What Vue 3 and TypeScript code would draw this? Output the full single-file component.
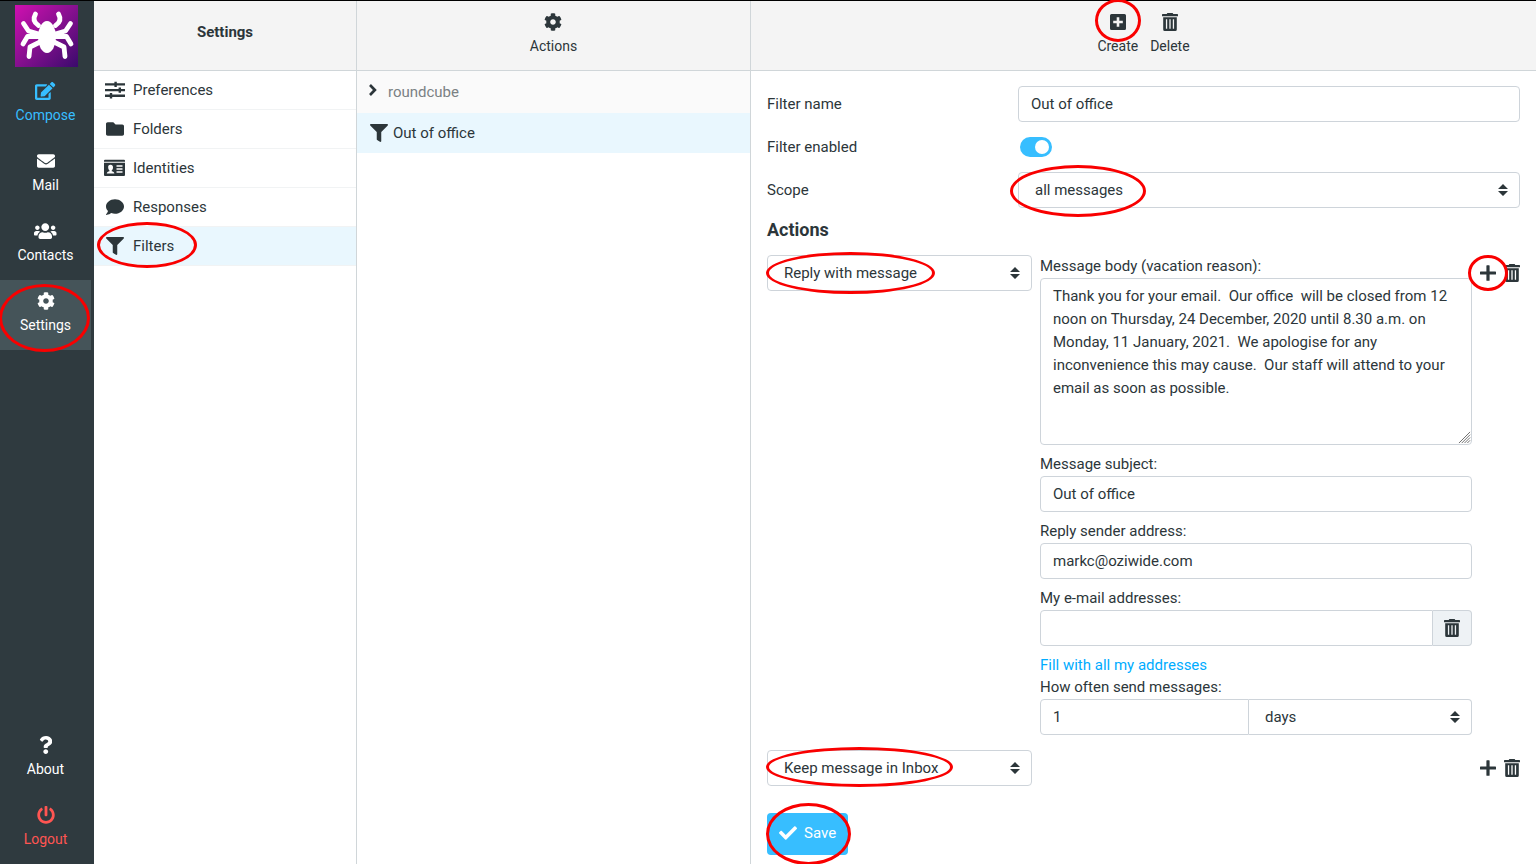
<script setup lang="ts">
import { h, ref } from 'vue'

interface Glyph { box: string; d: string }

const glyphs: Record<string, Glyph> = {
  edit: { box: '0 0 576 512', d: 'M402.6 83.2l90.2 90.2c3.8 3.8 3.8 10 0 13.8L274.4 405.6l-92.8 10.3c-12.4 1.4-22.9-9.1-21.5-21.5l10.3-92.8L388.8 83.2c3.8-3.8 10-3.8 13.8 0zm162-22.9l-48.8-48.8c-15.2-15.2-39.9-15.2-55.2 0l-35.4 35.4c-3.8 3.8-3.8 10 0 13.8l90.2 90.2c3.8 3.8 10 3.8 13.8 0l35.4-35.4c15.2-15.3 15.2-40 0-55.2zM384 346.2V448H64V128h229.8c3.2 0 6.2-1.3 8.5-3.5l40-40c7.6-7.6 2.2-20.5-8.5-20.5H48C21.5 64 0 85.5 0 112v352c0 26.5 21.5 48 48 48h352c26.5 0 48-21.5 48-48V306.2c0-10.7-12.9-16-20.5-8.5l-40 40c-2.2 2.3-3.5 5.3-3.5 8.5z' },
  mail: { box: '0 0 512 512', d: 'M502.3 190.8c3.9-3.1 9.7-.2 9.7 4.7V400c0 26.5-21.5 48-48 48H48c-26.5 0-48-21.5-48-48V195.6c0-5 5.7-7.8 9.7-4.7 22.4 17.4 52.1 39.5 154.1 113.6 21.1 15.4 56.7 47.8 92.2 47.6 35.7.3 72-32.8 92.3-47.6 102-74.1 131.6-96.3 154-113.7zM256 320c23.2.4 56.6-29.2 73.4-41.4 132.7-96.3 142.8-104.7 173.4-128.7 5.8-4.5 9.2-11.5 9.2-18.9v-19c0-26.5-21.5-48-48-48H48c-26.5 0-48 21.5-48 48v19c0 7.4 3.4 14.3 9.2 18.9 30.6 23.9 40.7 32.4 173.4 128.7 16.8 12.2 50.2 41.8 73.4 41.4z' },
  users: { box: '0 0 640 512', d: 'M96 224c35.3 0 64-28.7 64-64s-28.7-64-64-64-64 28.7-64 64 28.7 64 64 64zm448 0c35.3 0 64-28.7 64-64s-28.7-64-64-64-64 28.7-64 64 28.7 64 64 64zm32 32h-64c-17.6 0-33.5 7.1-45.1 18.6 40.3 22.1 68.9 62 75.1 109.4h66c17.7 0 32-14.3 32-32v-32c0-35.3-28.7-64-64-64zm-256 0c61.9 0 112-50.1 112-112S381.9 32 320 32 208 82.1 208 144s50.1 112 112 112zm76.8 32h-8.3c-20.8 10-43.9 16-68.5 16s-47.6-6-68.5-16h-8.3C179.6 288 128 339.6 128 403.2V432c0 26.5 21.5 48 48 48h288c26.5 0 48-21.5 48-48v-28.8c0-63.6-51.6-115.2-115.2-115.2zm-223.7-13.4C161.5 263.1 145.6 256 128 256H64c-35.3 0-64 28.7-64 64v32c0 17.7 14.3 32 32 32h65.9c6.3-47.4 34.9-87.3 75.2-109.4z' },
  cog: { box: '0 0 512 512', d: 'M487.4 315.7l-42.6-24.6c4.3-23.2 4.3-47 0-70.2l42.6-24.6c4.9-2.8 7.1-8.6 5.5-14-11.1-35.6-30-67.8-54.7-94.6-3.8-4.1-10-5.1-14.8-2.3L380.8 110c-17.9-15.4-38.5-27.3-60.8-35.1V25.8c0-5.6-3.9-10.5-9.4-11.7-36.7-8.2-74.3-7.8-109.2 0-5.5 1.2-9.4 6.1-9.4 11.7V75c-22.2 7.9-42.8 19.8-60.8 35.1L88.7 85.5c-4.9-2.8-11-1.9-14.8 2.3-24.7 26.7-43.6 58.9-54.7 94.6-1.7 5.4.6 11.2 5.5 14L67.3 221c-4.3 23.2-4.3 47 0 70.2l-42.6 24.6c-4.9 2.8-7.1 8.6-5.5 14 11.1 35.6 30 67.8 54.7 94.6 3.8 4.1 10 5.1 14.8 2.3l42.6-24.6c17.9 15.4 38.5 27.3 60.8 35.1v49.2c0 5.6 3.9 10.5 9.4 11.7 36.7 8.2 74.3 7.8 109.2 0 5.5-1.2 9.4-6.1 9.4-11.7v-49.2c22.2-7.9 42.8-19.8 60.8-35.1l42.6 24.6c4.9 2.8 11 1.9 14.8-2.3 24.7-26.7 43.6-58.9 54.7-94.6 1.5-5.5-.7-11.3-5.6-14.1zM256 336c-44.1 0-80-35.9-80-80s35.9-80 80-80 80 35.9 80 80-35.9 80-80 80z' },
  question: { box: '0 0 384 512', d: 'M202.021 0C122.202 0 70.503 32.703 29.914 91.026c-7.363 10.58-5.093 25.086 5.178 32.874l43.138 32.709c10.373 7.865 25.132 6.026 33.253-4.148 25.049-31.381 43.63-49.449 82.757-49.449 30.764 0 68.816 19.799 68.816 49.631 0 22.552-18.617 34.134-48.993 51.164-35.423 19.86-82.299 44.576-82.299 106.405V320c0 13.255 10.745 24 24 24h72.471c13.255 0 24-10.745 24-24v-5.773c0-42.86 125.268-44.645 125.268-160.627C377.504 66.256 286.902 0 202.021 0zM192 373.459c-38.196 0-69.271 31.075-69.271 69.271 0 38.195 31.075 69.27 69.271 69.27s69.271-31.075 69.271-69.271-31.075-69.27-69.271-69.27z' },
  power: { box: '0 0 512 512', d: 'M400 54.1c63 45 104 118.6 104 201.9 0 136.8-110.8 247.7-247.5 248C120 504.3 8.2 393 8 256.4 7.9 173.1 48.9 99.3 111.8 54.2c11.7-8.3 28-4.8 35 7.7L162.6 90c5.9 10.5 3.1 23.8-6.6 31-41.5 30.8-68 79.6-68 134.9-.1 92.3 74.5 168.1 168 168.1 91.6 0 168.6-74.2 168-169.1-.3-51.8-24.7-101.8-68.1-134-9.7-7.2-12.4-20.5-6.5-30.9l15.8-28.1c7-12.4 23.2-16.1 34.8-7.8zM296 264V24c0-13.3-10.7-24-24-24h-32c-13.3 0-24 10.7-24 24v240c0 13.3 10.7 24 24 24h32c13.3 0 24-10.7 24-24z' },
  sliders: { box: '0 0 20 18', d: 'M0 2.200h9.400V.7h2.400v1.500H20v2.300h-8.200v1.500H9.400V4.500H0zM0 7.900h13.600V6.400H16v1.500h4v2.300h-4v1.500h-2.400v-1.500H0zM0 13.600h4.800v-1.500h2.400v1.500H20v2.300H7.200v1.500H4.800v-1.500H0z' },
  folder: { box: '0 0 512 512', d: 'M464 128H272l-64-64H48C21.49 64 0 85.49 0 112v288c0 26.51 21.49 48 48 48h416c26.51 0 48-21.49 48-48V176c0-26.51-21.49-48-48-48z' },
  card: { box: '0 0 21 18', d: 'M1 .7h19a1 1 0 0 1 1 1v1H0v-1a1 1 0 0 1 1-1zM0 3.800h21v12.300a1 1 0 0 1-1 1H1a1 1 0 0 1-1-1zM6.500 5.800a2.300 2.300 0 0 0-2.300 2.600c0 1.300.6 2.400 1.300 3v.8c-1.500.3-2.700.9-2.700 2.300h7.600c0-1.400-1.200-2-2.700-2.300v-.8c.7-.6 1.300-1.700 1.300-3a2.300 2.300 0 0 0-2.500-2.600zM12.500 6.200v1.500h6V6.200zM12.500 9.200v1.500h6V9.200zM12.500 12.200v1.500h6v-1.500z' },
  comment: { box: '0 0 512 512', d: 'M256 32C114.6 32 0 125.1 0 240c0 49.6 21.4 95 57 130.7C44.500 421.1 2.700 466 2.200 466.500c-2.200 2.300-2.800 5.700-1.500 8.700S4.800 480 8 480c66.300 0 116-31.800 140.600-51.400 32.700 12.300 69 19.400 107.400 19.400 141.400 0 256-93.100 256-208S397.400 32 256 32z' },
  filter: { box: '0 0 512 512', d: 'M487.976 0H24.028C2.710 0-8.047 25.866 7.058 40.971L192 225.941V432c0 7.831 3.821 15.170 10.237 19.662l80 55.980C298.020 518.690 320 507.493 320 487.980V225.941l184.947-184.970C520.021 25.896 509.338 0 487.976 0z' },
  chevron: { box: '0 0 10 14', d: 'M2.600 0L9.400 7 2.600 14 .4 11.800 4.900 7 .4 2.200z' },
  create: { box: '0 0 18 18', d: 'M2.500 1h13A1.500 1.500 0 0 1 17 2.500v13a1.500 1.500 0 0 1-1.500 1.500h-13A1.500 1.500 0 0 1 1 15.500v-13A1.500 1.500 0 0 1 2.500 1zM7.700 4.200v3.500H4.200v2.600h3.500v3.500h2.600v-3.500h3.500V7.700h-3.500V4.200z' },
  plus: { box: '0 0 16 18', d: 'M7 1.200h2a.6.6 0 0 1 .6.6v5.600h5.800a.6.6 0 0 1 .6.6v2a.6.6 0 0 1-.6.6H9.600v5.600a.6.6 0 0 1-.6.6H7a.6.6 0 0 1-.6-.6v-5.600H.6A.6.6 0 0 1 0 10V8a.6.6 0 0 1 .6-.6h5.800V1.800a.6.6 0 0 1 .6-.6z' },
  trash: { box: '0 0 16 18', d: 'M5.400 0h5.200l.7 1.100H15.400a.6.6 0 0 1 .6.6V3.200H0V1.700a.6.6 0 0 1 .6-.6h4.100zM1.200 4.300h13.600v12.200a1.500 1.500 0 0 1-1.500 1.500H2.700a1.500 1.500 0 0 1-1.500-1.500zM3.900 6.300v9.500h1.300V6.300zM7.350 6.300v9.500h1.300V6.300zM10.800 6.300v9.500h1.300V6.300z' },
  sort: { box: '0 0 10 12', d: 'M5 0l5 5H0zM0 7h10l-5 5z' },
  check: { box: '0 0 512 512', d: 'M173.898 439.404l-166.400-166.400c-9.997-9.997-9.997-26.206 0-36.204l36.203-36.204c9.997-9.998 26.207-9.998 36.204 0L192 312.690 432.095 72.596c9.997-9.997 26.207-9.997 36.204 0l36.203 36.204c9.997 9.997 9.997 26.206 0 36.204l-294.400 294.401c-9.998 9.997-26.207 9.997-36.204-.001z' },
}

const Icon = (props: { name: string }) =>
  h('svg', { viewBox: glyphs[props.name].box, 'aria-hidden': 'true', fill: 'currentColor' }, [
    h('path', { d: glyphs[props.name].d, 'fill-rule': 'evenodd' }),
  ])

const tasks = [
  { label: 'Compose', icon: 'edit', kind: 'compose' },
  { label: 'Mail', icon: 'mail', kind: '' },
  { label: 'Contacts', icon: 'users', kind: '' },
  { label: 'Settings', icon: 'cog', kind: 'selected' },
]
const bottomTasks = [
  { label: 'About', icon: 'question', kind: '' },
  { label: 'Logout', icon: 'power', kind: 'logout' },
]
const sections = [
  { label: 'Preferences', icon: 'sliders' },
  { label: 'Folders', icon: 'folder' },
  { label: 'Identities', icon: 'card' },
  { label: 'Responses', icon: 'comment' },
  { label: 'Filters', icon: 'filter' },
]

const filterName = ref('Out of office')
const enabled = ref(true)
const body = ref('Thank you for your email.  Our office  will be closed from 12 noon on Thursday, 24 December, 2020 until 8.30 a.m. on Monday, 11 January, 2021.  We apologise for any inconvenience this may cause.  Our staff will attend to your email as soon as possible.')
const subject = ref('Out of office')
const sender = ref('markc@oziwide.com')
const addresses = ref('')
const interval = ref('1')
</script>

<template>
  <div class="app">
    <nav class="taskbar" aria-label="Tasks">
      <div class="brand">
        <svg class="logo" viewBox="15 5 63 62" role="img" aria-label="Webmail">
          <defs>
            <linearGradient id="brand-fill" x1="0" y1="0" x2="1" y2="1">
              <stop offset="0" stop-color="#d010b0" />
              <stop offset="0.5" stop-color="#86108f" />
              <stop offset="1" stop-color="#3a0a6c" />
            </linearGradient>
          </defs>
          <rect x="15" y="5" width="63" height="62" fill="url(#brand-fill)" />
          <ellipse cx="47" cy="37" rx="9" ry="16" fill="#fff" />
          <g fill="none" stroke="#fff" stroke-width="4.800" stroke-linecap="round" stroke-linejoin="round">
            <path d="M35.500 14q-4 7 3 11.500M23.500 23.500l5 7.500 12 3.500M23 44l4.500-7.500H40M29 56.500l1-9.500 10-5" />
            <path d="M58.500 14q4 7-3 11.500M70.500 23.500l-5 7.500-12 3.500M71 44l-4.500-7.500H54M65 56.500l-1-9.500-10-5" />
          </g>
        </svg>
      </div>
      <a v-for="t in tasks" :key="t.label" href="#" class="task" :class="t.kind">
        <Icon :name="t.icon" class="icon" />
        <span>{{ t.label }}</span>
        <i v-if="t.kind === 'selected'" class="ring ring-task"></i>
      </a>
      <div class="spring"></div>
      <a v-for="t in bottomTasks" :key="t.label" href="#" class="task" :class="t.kind">
        <Icon :name="t.icon" class="icon" />
        <span>{{ t.label }}</span>
      </a>
    </nav>

    <aside class="pane sidebar">
      <header class="head"><h1 class="title">Settings</h1></header>
      <ul class="list">
        <li v-for="s in sections" :key="s.label">
          <a href="#" class="section" :class="{ active: s.icon === 'filter' }">
            <span class="slot"><Icon :name="s.icon" class="icon" /></span>
            {{ s.label }}
            <i v-if="s.icon === 'filter'" class="ring ring-section"></i>
          </a>
        </li>
      </ul>
    </aside>

    <section class="pane filters">
      <header class="head">
        <button type="button" class="tool"><Icon name="cog" class="icon" /><span>Actions</span></button>
      </header>
      <ul class="list">
        <li><a href="#" class="set"><Icon name="chevron" class="arrow" />roundcube</a></li>
        <li><a href="#" class="rule"><Icon name="filter" class="icon" />Out of office</a></li>
      </ul>
    </section>

    <main class="content">
      <header class="head">
        <button type="button" class="tool">
          <Icon name="create" class="icon" /><span>Create</span><i class="ring ring-create"></i>
        </button>
        <button type="button" class="tool"><Icon name="trash" class="icon" /><span>Delete</span></button>
      </header>

      <form class="form" @submit.prevent>
        <div class="row">
          <label for="name">Filter name</label>
          <input id="name" v-model="filterName" type="text" class="control" />
        </div>
        <div class="row">
          <label for="enabled">Filter enabled</label>
          <input id="enabled" v-model="enabled" type="checkbox" class="switch" />
        </div>
        <div class="row">
          <label for="scope">Scope</label>
          <div class="select">
            <select id="scope" class="control"><option>all messages</option></select>
            <Icon name="sort" class="sort" />
            <i class="ring ring-scope"></i>
          </div>
        </div>

        <h2 class="heading">Actions</h2>

        <div class="action">
          <div class="select">
            <select class="control" aria-label="Action"><option>Reply with message</option></select>
            <Icon name="sort" class="sort" />
            <i class="ring ring-reply"></i>
          </div>
          <div class="fields">
            <div class="field">
              <label for="body">Message body (vacation reason):</label>
              <div class="area">
                <textarea id="body" v-model="body" class="control text" spellcheck="false"></textarea>
                <svg class="grip" viewBox="0 0 14 14" aria-hidden="true">
                  <path d="M1 13L13 1M4 13l9-9M7 13l6-6M10 13l3-3" fill="none" stroke="#666" />
                </svg>
              </div>
            </div>
            <div class="field">
              <label for="subject">Message subject:</label>
              <input id="subject" v-model="subject" type="text" class="control" />
            </div>
            <div class="field">
              <label for="sender">Reply sender address:</label>
              <input id="sender" v-model="sender" type="text" class="control" />
            </div>
            <div class="field">
              <label for="addresses">My e-mail addresses:</label>
              <div class="group">
                <input id="addresses" v-model="addresses" type="text" class="control" />
                <button type="button" class="addon" aria-label="Clear"><Icon name="trash" class="icon" /></button>
              </div>
            </div>
            <div class="field">
              <a href="#" class="fill">Fill with all my addresses</a>
              <label for="interval">How often send messages:</label>
              <div class="group period">
                <input id="interval" v-model="interval" type="text" class="control" />
                <div class="select unit">
                  <select class="control" aria-label="Unit"><option>days</option></select>
                  <Icon name="sort" class="sort" />
                </div>
              </div>
            </div>
          </div>
          <div class="buttons">
            <button type="button" aria-label="Add action"><Icon name="plus" class="icon" /><i class="ring ring-plus"></i></button>
            <button type="button" aria-label="Delete action"><Icon name="trash" class="icon" /></button>
          </div>
        </div>

        <div class="action">
          <div class="select">
            <select class="control" aria-label="Action"><option>Keep message in Inbox</option></select>
            <Icon name="sort" class="sort" />
            <i class="ring ring-keep"></i>
          </div>
          <div></div>
          <div class="buttons">
            <button type="button" aria-label="Add action"><Icon name="plus" class="icon" /></button>
            <button type="button" aria-label="Delete action"><Icon name="trash" class="icon" /></button>
          </div>
        </div>

        <button type="submit" class="save">
          <Icon name="check" class="icon" />Save<i class="ring ring-save"></i>
        </button>
      </form>
    </main>
  </div>
</template>

<style>
body {
  margin: 0;
  overflow: hidden;
}
</style>

<style scoped>
.app {
  display: flex;
  box-sizing: border-box;
  height: 100vh;
  border-top: 1px solid #000;
  background: #fff;
  color: #2c363a;
  font: 15px/23px Roboto, "Liberation Sans", sans-serif;
}
.app *,
.app *::before {
  box-sizing: border-box;
}
a {
  color: inherit;
  text-decoration: none;
}
button {
  position: relative;
  padding: 0;
  border: 0;
  background: none;
  color: inherit;
  font: inherit;
}
.icon {
  display: block;
  flex: none;
  width: auto;
  height: 18px;
}

.taskbar {
  display: flex;
  flex: none;
  flex-direction: column;
  width: 94px;
  padding-right: 3px;
  background: #2f3a3f;
  color: #fff;
}
.brand {
  flex: none;
  height: 69px;
  padding: 4px 0 0 15px;
}
.logo {
  display: block;
  width: 63px;
  height: 62px;
}
.task {
  position: relative;
  display: flex;
  flex: none;
  flex-direction: column;
  align-items: center;
  height: 70px;
  padding-top: 12px;
  gap: 4px;
  font-size: 14px;
}
.compose { color: #37beff; }
.logout { color: #ff5552; }
.selected { background: #455459; }
.spring { flex: 1; }

.pane {
  flex: none;
  border-right: 1px solid #d0d6d9;
}
.sidebar { width: 263px; }
.filters { width: 394px; }
.head {
  display: flex;
  justify-content: center;
  gap: 12px;
  height: 70px;
  border-bottom: 1px solid #d0d6d9;
  background: #f4f4f4;
}
.title {
  margin: 0;
  padding-top: 20px;
  font-size: 15px;
  font-weight: 700;
}
.tool {
  display: flex;
  flex-direction: column;
  align-items: center;
  padding-top: 12px;
  gap: 4px;
  font-size: 14px;
}
.list {
  margin: 0;
  padding: 0;
  list-style: none;
}
.section {
  position: relative;
  display: flex;
  align-items: center;
  height: 39px;
  padding-left: 10px;
  gap: 8px;
  border-bottom: 1px solid #f1f3f4;
}
.slot {
  display: flex;
  justify-content: center;
  width: 21px;
}
.active,
.rule {
  background: #e9f7fe;
}
.set,
.rule {
  display: flex;
  align-items: center;
}
.set {
  height: 42px;
  padding-left: 11px;
  gap: 10px;
  background: #fafafa;
  color: #7b8184;
}
.arrow {
  width: 10px;
  height: 12px;
  margin-bottom: 4px;
  color: #2c363a;
}
.rule {
  height: 40px;
  padding-left: 13px;
  gap: 5px;
}

.content {
  flex: 1;
  min-width: 0;
}
.form {
  padding: 15px 16px 0;
}
.row {
  display: grid;
  grid-template-columns: 1fr 2fr;
  align-items: center;
  height: 36px;
  margin-bottom: 7px;
}
.control {
  display: block;
  width: 100%;
  height: 36px;
  margin: 0;
  padding: 0 12px;
  border: 1px solid #ced4da;
  border-radius: 4px;
  outline: 0;
  background: #fff;
  color: inherit;
  font: inherit;
}
select.control {
  padding: 0 16px;
  appearance: none;
}
.select {
  position: relative;
}
.sort {
  position: absolute;
  top: 12px;
  right: 12px;
  width: 10px;
  height: 12px;
  pointer-events: none;
}
.switch {
  width: 32px;
  height: 20px;
  margin: 0 0 0 2px;
  padding: 3px;
  border-radius: 10px;
  background: #c3cacd;
  appearance: none;
}
.switch::before {
  display: block;
  width: 14px;
  height: 14px;
  border-radius: 50%;
  background: #fff;
  content: "";
}
.switch:checked {
  padding-left: 15px;
  background: #37beff;
}
.heading {
  margin: 10px 0 14px;
  font-size: 18px;
  font-weight: 700;
  line-height: 23px;
}
.action {
  display: grid;
  grid-template-columns: minmax(0, 265fr) minmax(0, 432fr) 40px;
  align-items: start;
  margin-bottom: 15px;
  gap: 8px;
}
.fields {
  display: grid;
  gap: 8px;
}
.field label,
.fill {
  display: block;
}
.fill {
  color: #00acff;
  line-height: 22px;
}
.area { position: relative; }
.text {
  height: 167px;
  padding: 6px 12px;
  overflow: hidden;
  resize: none;
}
.grip {
  position: absolute;
  right: 1px;
  bottom: 1px;
  width: 13px;
  height: 13px;
}
.group {
  display: grid;
  grid-template-columns: minmax(0, 1fr) 39px;
}
.period {
  grid-template-columns: minmax(0, 209fr) minmax(0, 223fr);
}
.group > .control {
  border-radius: 4px 0 0 4px;
}
.addon {
  display: flex;
  align-items: center;
  justify-content: center;
  border: 1px solid #ced4da;
  border-left: 0;
  border-radius: 0 4px 4px 0;
  background: #eef2f5;
}
.unit .control {
  border-left: 0;
  border-radius: 0 4px 4px 0;
}
.buttons {
  display: flex;
  align-items: center;
  justify-content: space-between;
  height: 36px;
}
.save {
  display: flex;
  align-items: center;
  height: 42px;
  margin-top: 27px;
  padding: 0 12px 2px;
  gap: 7px;
  border-radius: 4px;
  background: #37beff;
  color: #fff;
}

/* Hand-drawn style highlights laid over the controls */
.ring {
  position: absolute;
  z-index: 1;
  border: 3px solid #f90000;
  border-radius: 50%;
  pointer-events: none;
}
.ring-task { inset: 4px 1px -2px -1px; }
.ring-section { top: -5px; left: 3px; width: 100px; height: 46px; }
.ring-create { top: -2px; left: 50%; width: 46px; height: 43px; margin-left: -23px; }
.ring-scope { top: -7px; left: -8px; width: 136px; height: 52px; }
.ring-reply { top: -3px; left: -1px; width: 169px; height: 42px; }
.ring-plus { inset: -9px -12px; }
.ring-keep { top: -3px; left: -1px; width: 187px; height: 40px; }
.ring-save { inset: -10px -3px -10px -1px; }
</style>
